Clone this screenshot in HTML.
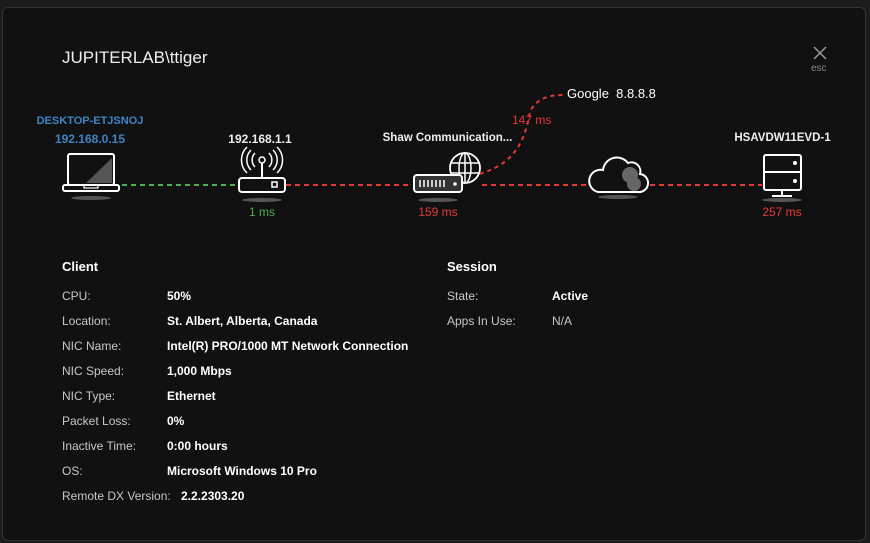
<!DOCTYPE html>
<html><head><style>
body{margin:0;width:870px;height:543px;background:#1c1c1c;font-family:"Liberation Sans",sans-serif;overflow:hidden;position:relative}
.m{position:absolute;left:2px;top:7px;width:862px;height:532px;background:#111;border:1px solid #333;border-radius:6px}
.a{position:absolute;white-space:nowrap}
.t{font-size:17px;color:#eee;left:62px;top:48px}
.lb{font-size:12px;color:#c8c8c8}
.v{font-size:12px;color:#fff;font-weight:bold}
.h{font-size:13px;color:#fff;font-weight:bold}
.n{font-size:11px;font-weight:bold;color:#eee;text-align:center}
.ms{font-size:12px;text-align:center}
</style></head><body>
<div class="m"></div>
<div class="a t">JUPITERLAB\ttiger</div>
<svg class="a" style="left:812px;top:45px" width="16" height="16"><path d="M2 2L14 14M14 2L2 14" stroke="#999" stroke-width="1.5"/></svg>
<div class="a" style="left:811px;top:63px;font-size:10px;color:#888">esc</div>

<svg class="a" style="left:0;top:0" width="870" height="230">
<path d="M122 185H238" stroke="#4caf50" stroke-width="2" stroke-dasharray="5,4"/>
<path d="M286 185H412M482 185H590M650 185H762" stroke="#e53935" stroke-width="2" stroke-dasharray="5,4"/>
<path d="M472 176C520 165 525 135 530 112C536 98 550 95 563 95" fill="none" stroke="#e53935" stroke-width="2" stroke-dasharray="4,4"/>
<rect x="68" y="154" width="46" height="31" rx="2" fill="#111" stroke="#fff" stroke-width="2"/>
<path d="M112 158L112 183L86 183Z" fill="#555"/>
<rect x="63" y="185" width="56" height="6" rx="2" fill="#111" stroke="#fff" stroke-width="2"/>
<rect x="84" y="185" width="14" height="3" fill="none" stroke="#fff" stroke-width="1.2"/>
<ellipse cx="91" cy="198" rx="20" ry="2" fill="#555"/>
<rect x="239" y="178" width="46" height="14" rx="3" fill="#111" stroke="#fff" stroke-width="2"/>
<rect x="272" y="182" width="5" height="5" fill="none" stroke="#fff" stroke-width="1.5"/>
<path d="M262 178V163" stroke="#fff" stroke-width="2"/>
<circle cx="262" cy="160" r="3" fill="none" stroke="#fff" stroke-width="1.5"/>
<path d="M255 153A10 10 0 0 0 255 167M269 153A10 10 0 0 1 269 167M251 150A14 14 0 0 0 251 170M273 150A14 14 0 0 1 273 170M247 147A18 18 0 0 0 247 173M277 147A18 18 0 0 1 277 173" fill="none" stroke="#fff" stroke-width="1.5"/>
<ellipse cx="262" cy="200" rx="20" ry="2" fill="#555"/>
<circle cx="465" cy="168" r="15" fill="#111" stroke="#fff" stroke-width="1.8"/>
<ellipse cx="465" cy="168" rx="6" ry="15" fill="none" stroke="#fff" stroke-width="1.5"/>
<path d="M465 153V183M451 163H479M451 173H479" stroke="#fff" stroke-width="1.5"/>
<rect x="414" y="175" width="48" height="17" rx="3" fill="#333" stroke="#fff" stroke-width="2"/>
<path d="M420 180V187M424 180V187M428 180V187M432 180V187M436 180V187M440 180V187M444 180V187" stroke="#fff" stroke-width="1.5"/>
<circle cx="455" cy="184" r="1.8" fill="#fff"/>
<ellipse cx="438" cy="200" rx="20" ry="2" fill="#555"/>
<path d="M598 192H638A9 9 0 0 0 640 174A9 9 0 0 0 628 163A14 14 0 0 0 603 170A11 11 0 0 0 598 192Z" fill="#111" stroke="#fff" stroke-width="2"/>
<circle cx="630" cy="175" r="8" fill="#666"/><circle cx="634" cy="184" r="7" fill="#666"/>
<ellipse cx="618" cy="197" rx="20" ry="2" fill="#555"/>
<rect x="764" y="155" width="37" height="35" rx="2" fill="#111" stroke="#fff" stroke-width="2"/>
<path d="M764 172H801M782 190V196M772 196H792" stroke="#fff" stroke-width="2"/>
<circle cx="795" cy="163" r="2" fill="#fff"/><circle cx="795" cy="181" r="2" fill="#fff"/>
<ellipse cx="782" cy="200" rx="20" ry="2" fill="#555"/>
</svg>

<div class="a n" style="left:30px;width:120px;top:115px;color:#3d85c6">DESKTOP-ETJSNOJ</div>
<div class="a n" style="left:30px;width:120px;top:132px;color:#3d85c6;font-size:12px">192.168.0.15</div>
<div class="a n" style="left:210px;width:100px;top:132px;font-size:12px">192.168.1.1</div>
<div class="a n" style="left:370px;width:155px;top:132px;font-size:11.5px">Shaw Communication...</div>
<div class="a n" style="left:720px;width:125px;top:132px;font-size:11.5px">HSAVDW11EVD-1</div>
<div class="a" style="left:567px;top:86px;font-size:13px;color:#fff">Google&nbsp; 8.8.8.8</div>
<div class="a ms" style="left:512px;top:113px;color:#e53935">147 ms</div>
<div class="a ms" style="left:232px;width:60px;top:205px;color:#4caf50">1 ms</div>
<div class="a ms" style="left:408px;width:60px;top:205px;color:#e53935">159 ms</div>
<div class="a ms" style="left:752px;width:60px;top:205px;color:#e53935">257 ms</div>

<div class="a h" style="left:62px;top:259px">Client</div>
<div class="a h" style="left:447px;top:259px">Session</div>
<div class="a lb" style="left:62px;top:284px;line-height:25px">CPU:<br>Location:<br>NIC Name:<br>NIC Speed:<br>NIC Type:<br>Packet Loss:<br>Inactive Time:<br>OS:<br>Remote DX Version:</div>
<div class="a v" style="left:167px;top:284px;line-height:25px">50%<br>St. Albert, Alberta, Canada<br>Intel(R) PRO/1000 MT Network Connection<br>1,000 Mbps<br>Ethernet<br>0%<br>0:00 hours<br>Microsoft Windows 10 Pro<br><span style="margin-left:14px">2.2.2303.20</span></div>
<div class="a lb" style="left:447px;top:284px;line-height:25px">State:<br>Apps In Use:</div>
<div class="a v" style="left:552px;top:284px;line-height:25px">Active<br><span style="font-weight:normal;color:#c8c8c8">N/A</span></div>
</body></html>
